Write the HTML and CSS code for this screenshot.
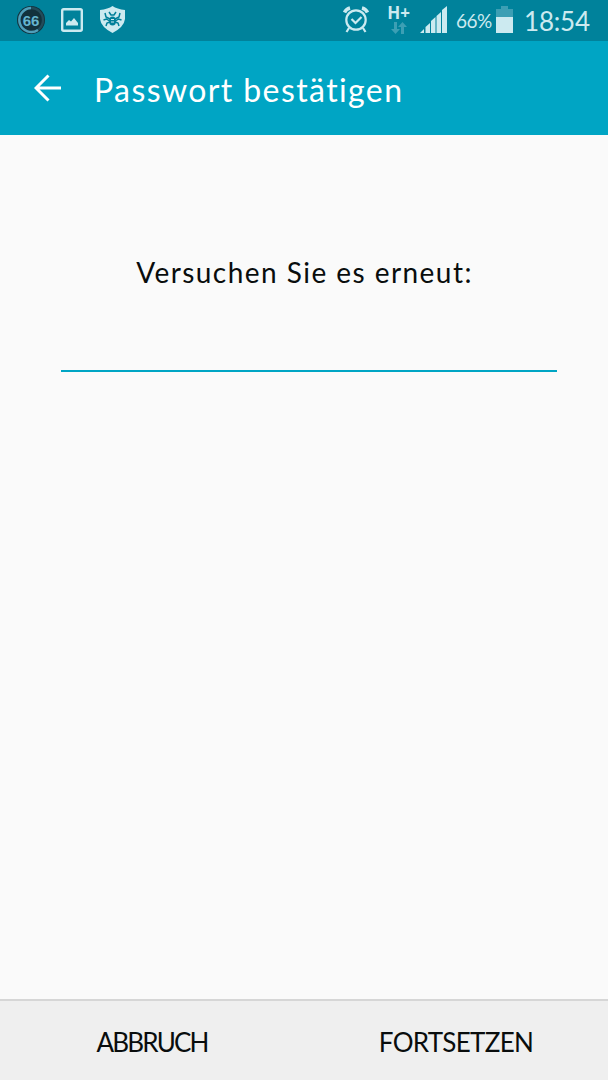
FILE: index.html
```html
<!DOCTYPE html>
<html lang="de">
<head>
  <meta charset="UTF-8">
  <title>Passwort bestätigen</title>
  <link rel="stylesheet" href="styles.css">
</head>
<body>
  <div class="statusbar">
    <div class="notifications">
      <svg class="icon-percent" width="28" height="28" viewBox="0 0 28 28">
        <circle cx="14" cy="14" r="14" fill="#12323d"/>
        <circle cx="14" cy="14" r="12" fill="none" stroke="#234c5a" stroke-width="2.4"/>
        <path d="M14 2A12 12 0 1 0 21 24" fill="none" stroke="#4f9fba" stroke-width="2.4"/>
        <text class="percent-text" x="14" y="19.500" text-anchor="middle">66</text>
      </svg>
      <svg class="icon-picture" width="22" height="24" viewBox="0 0 22 24">
        <rect x="1.2" y="1.2" width="19.6" height="21.6" rx="1.5" fill="none" stroke="#cceaf0" stroke-width="2.4"/>
        <path d="M5 17.500V15l3-3 2 1.500L13 10l4 5v2.500z" fill="#cceaf0"/>
      </svg>
      <svg class="icon-shield" width="25" height="27" viewBox="0 0 25 27">
        <path d="M12.500 0Q17 3 25 4V13Q24 21 12.500 27Q1 21 0 13V4Q8 3 12.500 0z" fill="#cceaf0"/>
        <ellipse cx="12.500" cy="15" rx="3.500" ry="4.500" fill="#007f99"/>
        <path d="M9 6l2 3h3l2-3M5 7l1 4 4 2M20 7l-1 4-4 2M3.500 14l3-1 3 2M21.500 14l-3-1-3 2M6 20l1-3 3-1M19 20l-1-3-3-1" fill="none" stroke="#007f99" stroke-width="1.500"/>
        <path d="M11 13.500h3M11 16h3" stroke="#cceaf0"/>
      </svg>
    </div>
    <div class="system">
      <svg class="icon-alarm" width="26" height="27" viewBox="0 0 26 27">
        <g fill="none" stroke="#cceaf0" stroke-width="2.2">
          <circle cx="13" cy="14" r="9.700"/>
          <path d="M8.500 13l4 4 6-6M6 22l-2.500 4M20 22l2.500 4"/>
          <path d="M1.500 6.500Q3 3 7 2M24.500 6.500Q23 3 19 2" stroke-width="3.500"/>
        </g>
      </svg>
      <div class="network">
        <span>H+</span>
        <svg width="16" height="12" viewBox="0 0 16 12">
          <path d="M3 0h3v7h3l-4.500 5L0 7h3zM10 12h3V5h3l-4.500-5L7 5h3z" fill="#3c9fb4"/>
        </svg>
      </div>
      <svg class="icon-signal" width="28" height="27" viewBox="0 0 28 27">
        <path d="M0 27l4-4v4zM5.500 27v-6l4.500-4v10zM11 27V15l4.500-4v16zM16.500 27V10l4.500-4v21zM22 27V4l5-4v27z" fill="#cceaf0"/>
      </svg>
      <span class="battery-text">66%</span>
      <svg class="icon-battery" width="17" height="27" viewBox="0 0 17 27">
        <path d="M0 3h5V0h7v3h5v8H0z" fill="#3c9fb4"/>
        <rect y="11" width="17" height="16" fill="#cceaf0"/>
      </svg>
      <span class="clock">18:54</span>
    </div>
  </div>

  <header class="toolbar">
    <svg class="back" width="28" height="28" viewBox="0 0 28 28">
      <path d="M14.500 1.500L2 14l12.500 12.500M2 14h25" fill="none" stroke="#fff" stroke-width="3"/>
    </svg>
    <h1>Passwort bestätigen</h1>
  </header>

  <main class="content">
    <label for="password">Versuchen Sie es erneut:</label>
    <input type="password" id="password">
  </main>

  <footer class="buttons">
    <button class="cancel">ABBRUCH</button>
    <button class="next">FORTSETZEN</button>
  </footer>
</body>
</html>
```

FILE: styles.css
```css
* {
  box-sizing: border-box;
}
body {
  margin: 0;
  height: 1080px;
  display: flex;
  flex-direction: column;
  overflow: hidden;
  background: #fafafa;
  font-family: Lato, sans-serif;
}
.statusbar {
  height: 41px;
  flex: none;
  display: flex;
  justify-content: space-between;
  padding: 6px 17px 0 17px;
  background: #00829b;
  color: #cceaf0;
}
.notifications,
.system {
  display: flex;
  align-items: flex-start;
}
.percent-text {
  font: bold 15px "Liberation Sans", sans-serif;
  fill: #65b5cf;
}
.icon-picture {
  margin: 2px 0 0 16px;
}
.icon-shield {
  margin-left: 17px;
}
.network {
  width: 23px;
  height: 30px;
  margin: -1px 10px 0 18px;
  display: flex;
  flex-direction: column;
  align-items: center;
  gap: 1px;
  font: bold 17px/16px "Open Sans", sans-serif;
}
.battery-text {
  width: 36px;
  margin: 4px 4px 0 8px;
  font-size: 19px;
  line-height: 22px;
  letter-spacing: -0.5px;
  white-space: nowrap;
}
.clock {
  width: 67px;
  margin: 1px 0 0 11px;
  font-size: 26px;
  line-height: 28px;
  letter-spacing: -0.2px;
  white-space: nowrap;
}
.toolbar {
  height: 94px;
  flex: none;
  display: flex;
  align-items: center;
  padding-left: 34px;
  background: #00a5c4;
  color: #fff;
}
.back {
  margin-bottom: 1px;
}
.toolbar h1 {
  margin: 3px 0 0 32px;
  font-size: 32px;
  line-height: 40px;
  font-weight: normal;
  letter-spacing: 1.4px;
}
.content {
  flex: 1;
  display: flex;
  flex-direction: column;
  padding: 117px 51px 0 61px;
}
.content label {
  margin-right: 9px;
  font-size: 28px;
  line-height: 40px;
  letter-spacing: 1.45px;
  text-align: center;
  white-space: nowrap;
  color: #090d0d;
}
.content input {
  height: 42px;
  margin: 38px 0 0;
  padding: 0;
  border: none;
  border-bottom: 2px solid #00a5c4;
  background: none;
  outline: none;
}
.buttons {
  height: 81px;
  flex: none;
  display: flex;
  border-top: 2px solid #d6d6d6;
  background: #efefef;
}
.buttons button {
  flex: 1;
  padding: 2px 0 0;
  border: none;
  background: none;
  font-family: inherit;
  font-size: 26px;
  color: #090d0d;
}
.cancel {
  letter-spacing: -1.8px;
}
.next {
  letter-spacing: -0.7px;
}
```
